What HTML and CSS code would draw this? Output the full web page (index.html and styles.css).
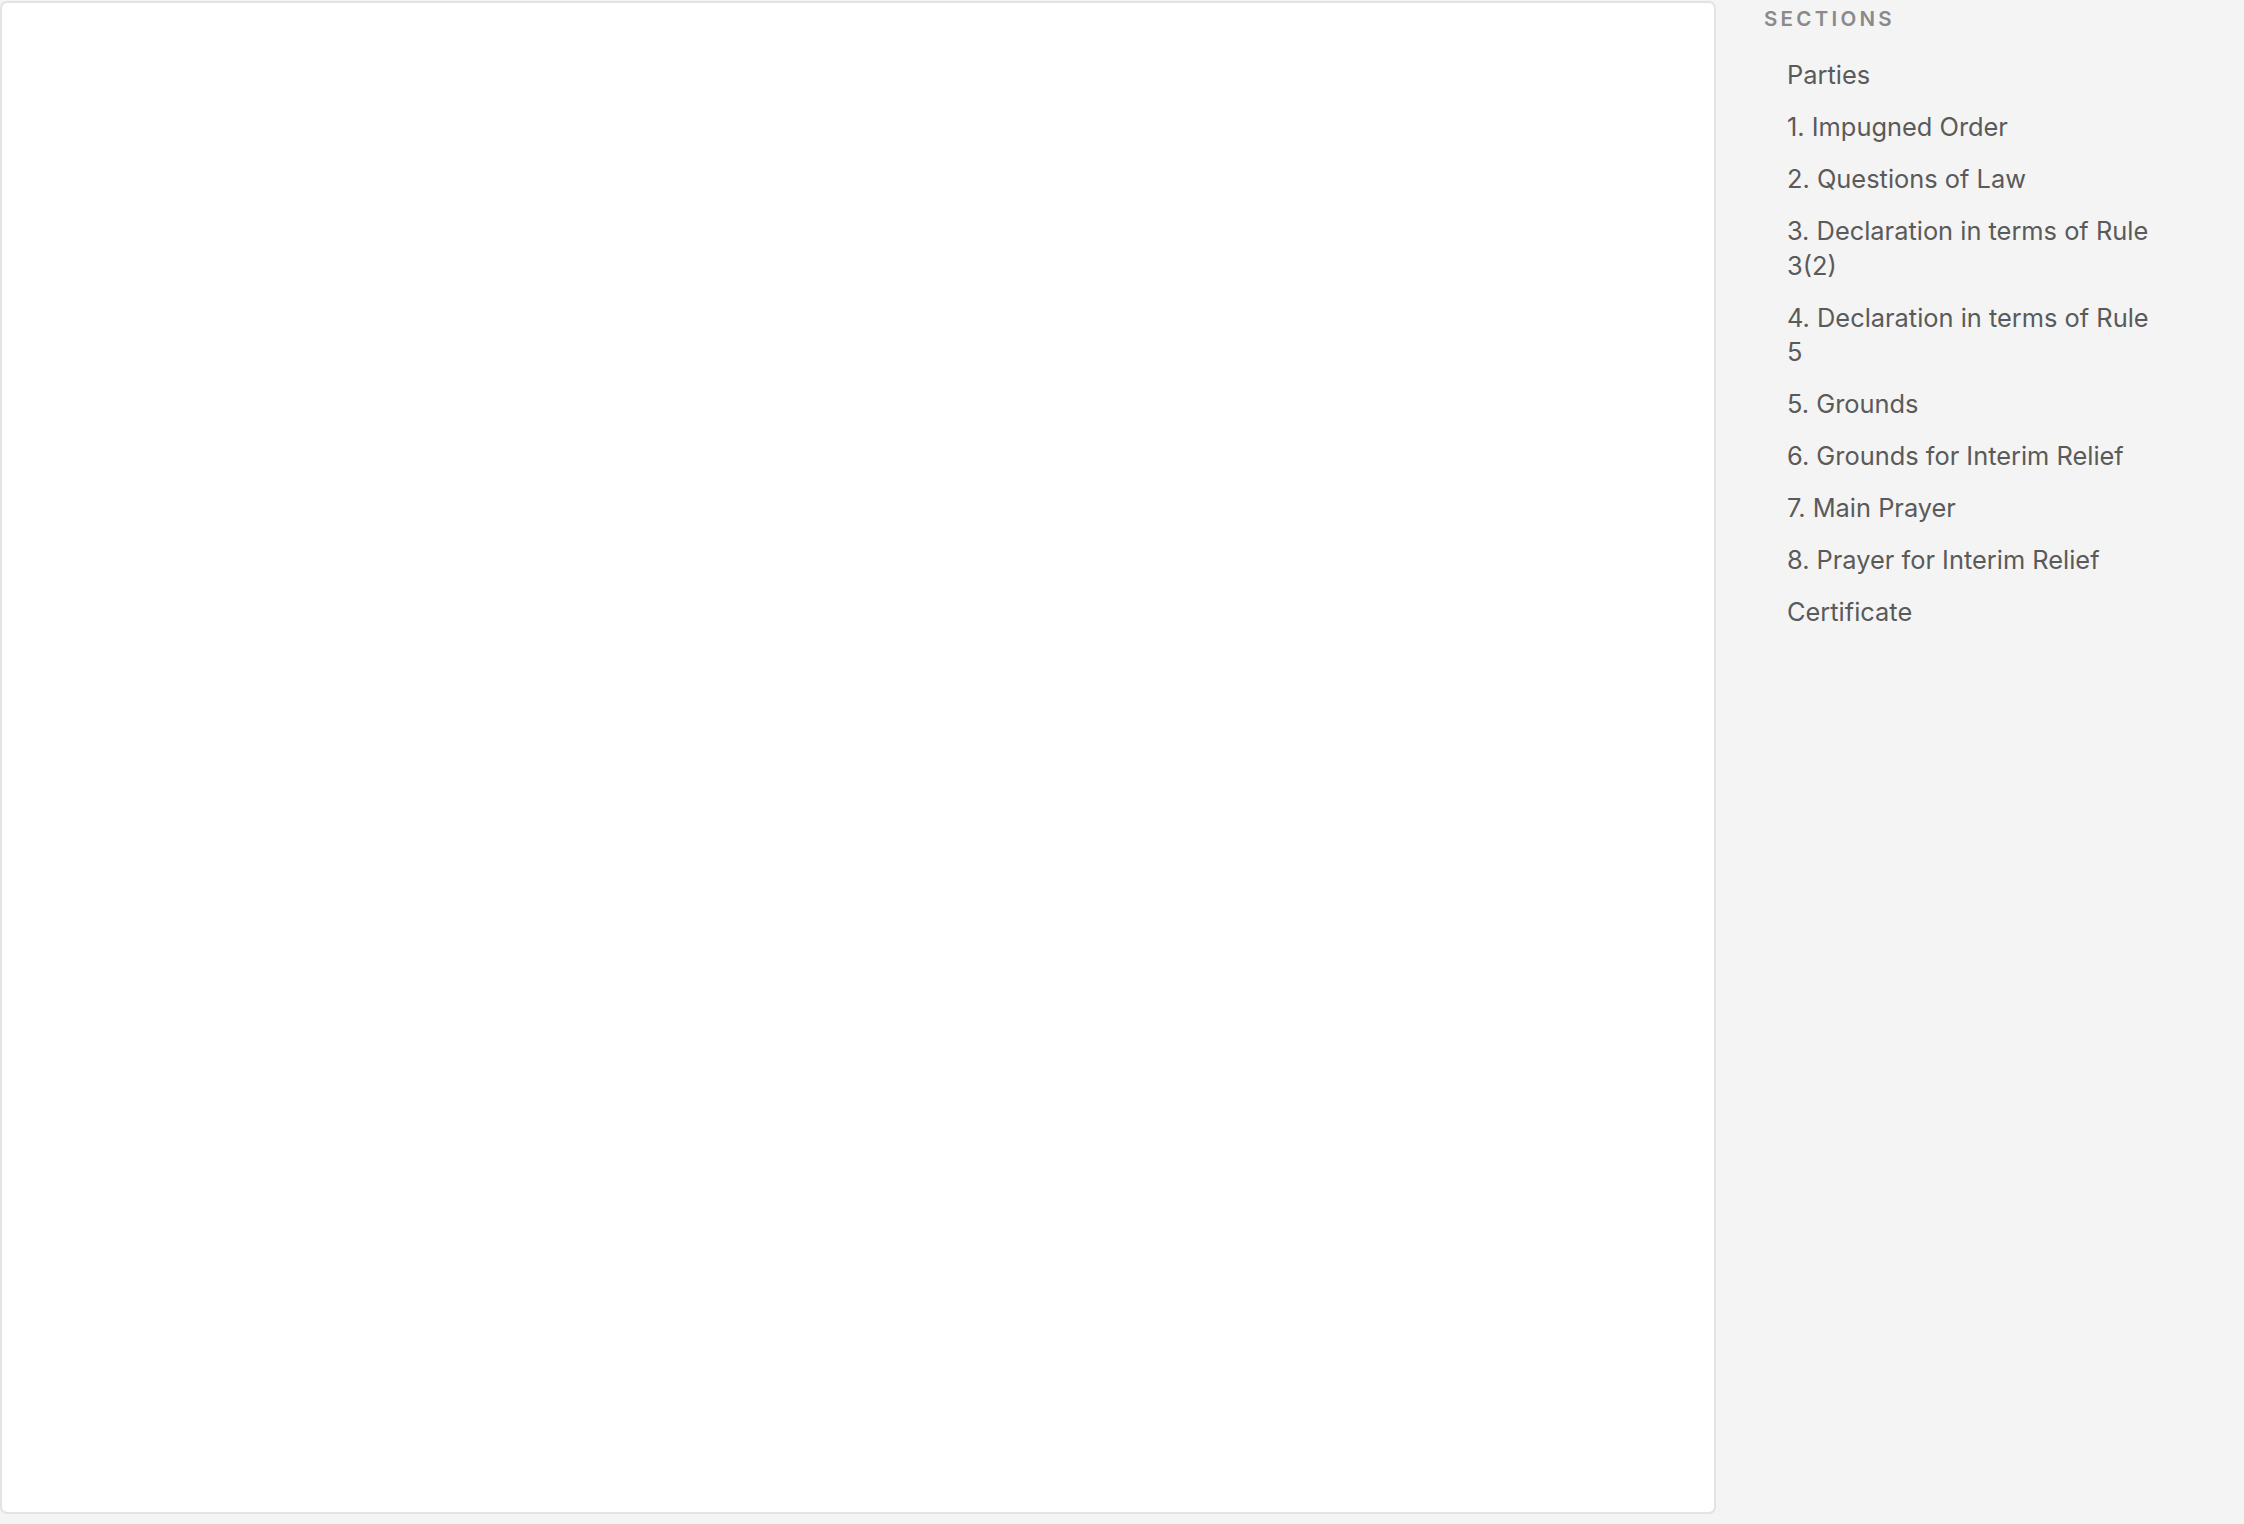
FILE: index.html
```html
<!DOCTYPE html>
<html lang="en">
<head>
<meta charset="utf-8">
<title>Sections</title>
<link rel="stylesheet" href="styles.css">
</head>
<body>
<div class="layout">
  <main class="doc-panel"></main>
  <aside class="sidebar">
    <div class="sidebar-title">SECTIONS</div>
    <nav class="section-list">
      <a class="section-link">Parties</a>
      <a class="section-link">1. Impugned Order</a>
      <a class="section-link">2. Questions of Law</a>
      <a class="section-link">3. Declaration in terms of Rule 3(2)</a>
      <a class="section-link">4. Declaration in terms of Rule 5</a>
      <a class="section-link">5. Grounds</a>
      <a class="section-link">6. Grounds for Interim Relief</a>
      <a class="section-link">7. Main Prayer</a>
      <a class="section-link">8. Prayer for Interim Relief</a>
      <a class="section-link">Certificate</a>
    </nav>
  </aside>
</div>
</body>
</html>
```
FILE: styles.css
```css
html, body {
  margin: 0;
  padding: 0;
  background: #f4f4f4;
  font-family: Inter, "Noto Sans", "Liberation Sans", sans-serif;
}
.layout {
  display: flex;
  align-items: flex-start;
  height: 1524px;
  overflow: hidden;
}
.doc-panel {
  flex: 0 0 auto;
  box-sizing: border-box;
  width: 1716px;
  height: 1513px;
  margin-top: 1px;
  background: #ffffff;
  border: 2px solid #e3e3e3;
  border-radius: 7px;
}
.sidebar {
  flex: 1 1 auto;
  box-sizing: border-box;
  padding: 5px 0 0 48px;
}
.sidebar-title {
  font-size: 20.5px;
  font-weight: 600;
  letter-spacing: 0.16em;
  color: #8a8a8a;
  line-height: 28px;
}
.section-list {
  display: flex;
  flex-direction: column;
  gap: 17.5px;
  padding: 25px 0 0 23px;
  width: 376px;
}
.section-link {
  display: block;
  font-size: 25.4px;
  line-height: 34.5px;
  color: #5a5a5a;
  text-decoration: none;
}
```
